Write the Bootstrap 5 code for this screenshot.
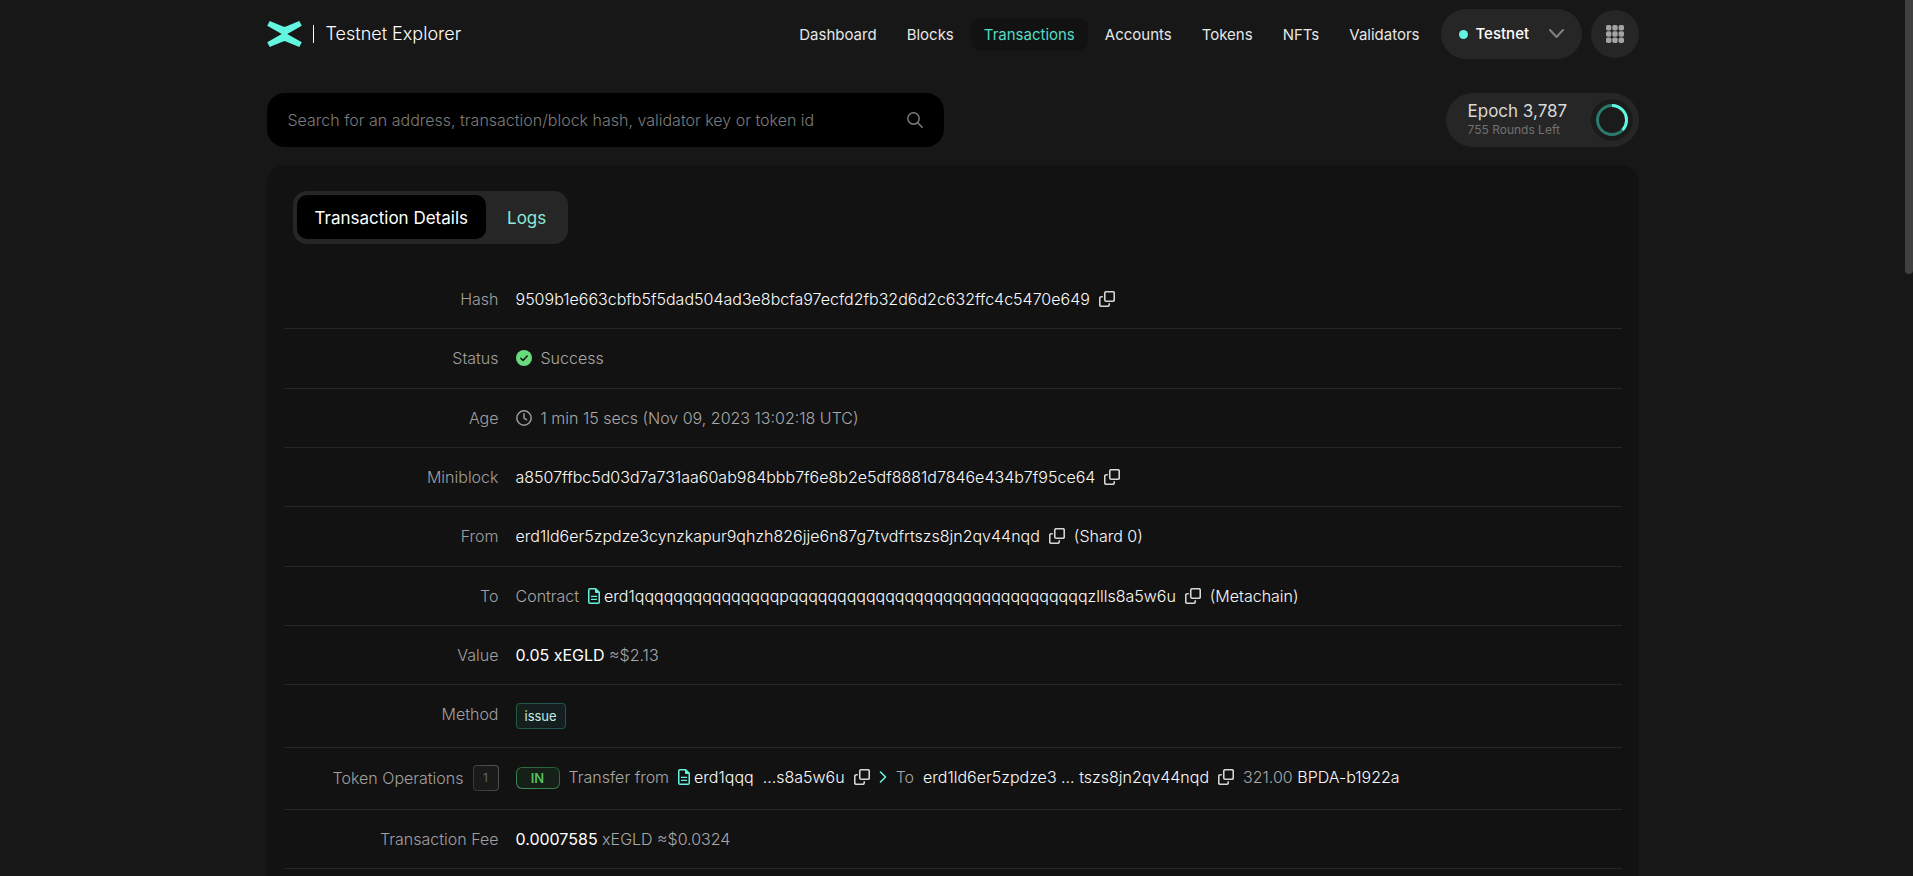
<!DOCTYPE html>
<html lang="en" data-bs-theme="dark">
<head>
<meta charset="utf-8">
<meta name="viewport" content="width=device-width, initial-scale=1">
<title>Transaction Details | Testnet Explorer</title>
<link href="https://cdn.jsdelivr.net/npm/bootstrap@5.3.0/dist/css/bootstrap.min.css" rel="stylesheet">
<style>
  :root {
    --accent: #62f5df;
    --panel: #121212;
    --raised: #262626;
    --muted: #a8a8a8;
    --link: #fafafa;
  }
  html, body { height: 100%; }
  body {
    background: #171717;
    color: var(--muted);
    font-family: Inter, "Liberation Sans", sans-serif;
    font-size: 16px;
    font-weight: 300;
    line-height: 24px;
    overflow: hidden;
  }
  a { text-decoration: none; }
  svg { display: block; flex-shrink: 0; }
  .viewport { height: 100vh; overflow: hidden; padding-right: 8px; }
  .page-width { max-width: 1396px; padding-left: 12px; padding-right: 12px; }

  .topbar { height: 68px; }
  .brand-title { color: #fff; font-size: 18px; padding-left: 12px; }
  .brand-rule { width: 1px; height: 18px; background: #fff; margin-left: 11px; }
  .menu .nav-link {
    color: #e6e6e6;
    font-size: 15px;
    font-weight: 400;
    line-height: 17px;
    padding: 8px 13px;
    border-radius: 10px;
  }
  .menu .nav-link.active { background: var(--panel); color: #55dcc6; }
  .menu { gap: 4px; margin-right: 8px; }
  .network {
    height: 50px;
    width: 141px;
    border-radius: 25px;
    background: var(--raised);
    color: #fff;
    font-size: 15px;
    font-weight: 500;
    padding: 0 18px;
  }
  .network-dot { width: 9px; height: 9px; border-radius: 50%; background: var(--accent); }
  .apps { width: 48px; height: 48px; border-radius: 50%; background: var(--raised); margin-left: 9px; }

  .tools { padding-top: 25px; }
  .search-box {
    width: 677px;
    height: 54px;
    border-radius: 18px;
    background: #000;
    padding: 0 21px;
  }
  .search-box .form-control { color: #ddd; font-size: 16px; font-weight: 300; }
  .search-box .form-control::placeholder { color: #7c7c7c; opacity: 1; }
  .epoch { height: 54px; width: 193px; border-radius: 27px; background: var(--raised); padding: 0 6px 0 22px; font-weight: 400; }
  .epoch-name { color: #d8d8d8; font-size: 17px; line-height: 20px; }
  .epoch-left { color: #717171; font-size: 12px; line-height: 18px; }

  .panel { background: var(--panel); border-radius: 18px; margin-top: 18px; padding: 26px 17px 0; }
  .tab-strip { background: var(--raised); border-radius: 14px; padding: 4px 4px 5px; margin-left: 9px; gap: 3px; }
  .tab-strip .nav-link {
    color: #8ee8d6;
    font-size: 17px;
    font-weight: 400;
    line-height: 24px;
    padding: 11px 18px 9px;
    border-radius: 10px;
  }
  .tab-strip .nav-link.active { background: #000; color: #fff; }

  .details { padding-top: 26px; }
  .detail { min-height: 59px; padding-top: 17px; border-bottom: 1px solid #262626; }
  .detail:nth-child(3n+2) { min-height: 60px; }
  .detail > * { padding-left: 9px; padding-right: 9px; font-weight: 300; margin: 0; }
  .detail dt { text-align: right; color: #a0a0a0; padding-right: 8px; }
  .detail dd a, .bright { color: var(--link); }
  .amount { color: #fff; font-weight: 400; }
  .copy-btn { border: 0; background: none; padding: 0; color: #d6d6d6; }
  .g-icon { gap: 9px; }
  .detail.tall-tag { min-height: 63px; }
  .detail.tall-ops { min-height: 62px; }

  .method-tag {
    height: 26px;
    border: 1px solid transparent;
    border-radius: 4px;
    background: linear-gradient(90deg, #15201c, #141e20) padding-box, linear-gradient(90deg, #23573f, #1c5360) border-box;
    color: #c4eee4;
    font-size: 13px;
    font-weight: 400;
    line-height: 24px;
    padding: 0 8px;
    margin-top: 1px;
  }
  .in-tag {
    width: 44px;
    height: 22px;
    border: 1px solid transparent;
    border-radius: 6px;
    background: linear-gradient(#142018, #142018) padding-box, linear-gradient(200deg, #245c2f, #3f8f5e) border-box;
    color: #55bf59;
    font-size: 13px;
    font-weight: 600;
    line-height: 20px;
    margin-top: 2px;
  }
  .count-tag {
    width: 26px;
    height: 26px;
    border: 1px solid transparent;
    border-radius: 4px;
    background: linear-gradient(#1a1a1b, #1a1a1b) padding-box, linear-gradient(60deg, #32323a, #55555a) border-box;
    color: #666;
    font-size: 12px;
    font-weight: 400;
    line-height: 24px;
  }
  .scroll-thumb { position: fixed; top: 0; right: 0; width: 8px; height: 274px; background: #404040; border-radius: 0 0 4px 4px; }
</style>
</head>
<body>
<svg width="0" height="0" class="position-absolute" aria-hidden="true">
  <symbol id="copy" viewBox="0 0 16 16">
    <rect x="5.75" y=".75" width="9.5" height="9.5" rx="1.4" fill="none" stroke="currentColor" stroke-width="1.6"/>
    <path d="M3.8 5.75H2.2A1.45 1.45 0 0 0 .75 7.2v6.6a1.45 1.45 0 0 0 1.45 1.45h6.6a1.45 1.45 0 0 0 1.45-1.45v-1.6" fill="none" stroke="currentColor" stroke-width="1.6"/>
  </symbol>
  <symbol id="contract" viewBox="0 0 12 16">
    <path d="M2 .75h5.6l3.65 3.65V14c0 .7-.55 1.25-1.25 1.25H2C1.3 15.25.75 14.7.75 14V2C.75 1.3 1.3.75 2 .75z" fill="none" stroke="currentColor" stroke-width="1.5"/>
    <path d="M7 .5V4a1 1 0 0 0 1 1h3.5zM3 7.75h6v1.3H3zM3 10.75h6v1.3H3z" fill="currentColor"/>
  </symbol>
</svg>

<div class="viewport">
  <header class="container-fluid page-width topbar d-flex align-items-center">
    <a href="#" class="d-flex align-items-center">
      <svg width="35" height="26" viewBox="0 0 35 26" aria-label="Home"><path fill="#62f5df" d="M20.3 13 34.8 4.8 32.3 0 18.3 5.7a2.2 2.2 0 0 1-1.6 0L2.7 0 .2 4.8 14.7 13 .2 21.2 2.7 26l14-5.7a2.2 2.2 0 0 1 1.6 0l14 5.7 2.5-4.8z"/></svg>
      <span class="brand-rule"></span>
      <span class="brand-title">Testnet Explorer</span>
    </a>
    <nav class="nav menu ms-auto flex-nowrap">
      <a class="nav-link" href="#">Dashboard</a>
      <a class="nav-link" href="#">Blocks</a>
      <a class="nav-link active" href="#" aria-current="page">Transactions</a>
      <a class="nav-link" href="#">Accounts</a>
      <a class="nav-link" href="#">Tokens</a>
      <a class="nav-link" href="#">NFTs</a>
      <a class="nav-link" href="#">Validators</a>
    </nav>
    <button type="button" class="network border-0 d-flex align-items-center">
      <span class="network-dot me-2"></span>Testnet
      <svg class="ms-auto" width="15" height="10" viewBox="0 0 15 10" fill="none" stroke="#808080" stroke-width="2" stroke-linecap="round" stroke-linejoin="round"><path d="M1 1l6.5 7L14 1"/></svg>
    </button>
    <button type="button" class="apps border-0 p-0 d-flex align-items-center justify-content-center" aria-label="Apps">
      <svg width="18" height="18" viewBox="0 0 18 18" fill="#a3a3a3"><rect width="5.4" height="5.4" rx="1.7"/><rect x="6.3" width="5.4" height="5.4" rx="1.7"/><rect x="12.6" width="5.4" height="5.4" rx="1.7"/><rect y="6.3" width="5.4" height="5.4" rx="1.7"/><rect x="6.3" y="6.3" width="5.4" height="5.4" rx="1.7"/><rect x="12.6" y="6.3" width="5.4" height="5.4" rx="1.7"/><rect y="12.6" width="5.4" height="5.4" rx="1.7"/><rect x="6.3" y="12.6" width="5.4" height="5.4" rx="1.7"/><rect x="12.6" y="12.6" width="5.4" height="5.4" rx="1.7"/></svg>
    </button>
  </header>

  <main class="container-fluid page-width">
    <div class="tools d-flex justify-content-between">
      <form class="search-box d-flex align-items-center" role="search">
        <input type="text" class="form-control border-0 bg-transparent shadow-none p-0" aria-label="Search" placeholder="Search for an address, transaction/block hash, validator key or token id">
        <button type="submit" class="copy-btn" aria-label="Search">
          <svg width="16" height="16" viewBox="0 0 16 16" fill="none" stroke="#808080" stroke-width="1.4" stroke-linecap="round"><circle cx="6.5" cy="6.5" r="5.7"/><path d="M10.7 10.7l4.5 4.5"/></svg>
        </button>
      </form>
      <div class="epoch d-flex align-items-center justify-content-between">
        <div>
          <div class="epoch-name">Epoch 3,787</div>
          <div class="epoch-left">755 Rounds Left</div>
        </div>
        <svg width="42" height="42" viewBox="0 0 42 42" fill="none"><circle cx="21" cy="21" r="21" fill="#1b1b1b"/><circle cx="21" cy="21" r="14.5" stroke="#2b7a6e" stroke-width="3"/><circle cx="21" cy="21" r="14.5" stroke="#62f5df" stroke-width="3" pathLength="100" stroke-dasharray="37 100" transform="rotate(-90 21 21)"/></svg>
      </div>
    </div>

    <section class="panel">
      <div class="d-flex">
        <nav class="nav tab-strip">
          <a class="nav-link active" href="#" aria-current="page">Transaction Details</a>
          <a class="nav-link" href="#">Logs</a>
        </nav>
      </div>

      <dl class="details mb-0">
        <div class="detail row gx-0">
          <dt class="col-2">Hash</dt>
          <dd class="col-10 d-flex align-items-center align-self-start g-icon"><span class="bright">9509b1e663cbfb5f5dad504ad3e8bcfa97ecfd2fb32d6d2c632ffc4c5470e649</span>
            <button type="button" class="copy-btn" aria-label="Copy"><svg width="16" height="16"><use href="#copy"/></svg></button></dd>
        </div>
        <div class="detail row gx-0">
          <dt class="col-2">Status</dt>
          <dd class="col-10 d-flex align-items-center align-self-start g-icon"><svg width="16" height="16" viewBox="0 0 16 16"><circle cx="8" cy="8" r="8" fill="#68db7f"/><path d="M4.8 8.3l2.2 2.2 4.2-4.4" fill="none" stroke="#121212" stroke-width="1.5" stroke-linecap="round" stroke-linejoin="round"/></svg>Success</dd>
        </div>
        <div class="detail row gx-0">
          <dt class="col-2">Age</dt>
          <dd class="col-10 d-flex align-items-center align-self-start g-icon"><svg width="16" height="16" viewBox="0 0 16 16" fill="none" stroke="#9b9b9b" stroke-width="1.5" stroke-linecap="round"><circle cx="8" cy="8" r="7.2"/><path d="M8 3.8V8l2.7 1.8"/></svg>1 min 15 secs (Nov 09, 2023 13:02:18 UTC)</dd>
        </div>
        <div class="detail row gx-0">
          <dt class="col-2">Miniblock</dt>
          <dd class="col-10 d-flex align-items-center align-self-start g-icon"><a href="#">a8507ffbc5d03d7a731aa60ab984bbb7f6e8b2e5df8881d7846e434b7f95ce64</a>
            <button type="button" class="copy-btn" aria-label="Copy"><svg width="16" height="16"><use href="#copy"/></svg></button></dd>
        </div>
        <div class="detail row gx-0">
          <dt class="col-2">From</dt>
          <dd class="col-10 d-flex align-items-center align-self-start g-icon"><a href="#">erd1ld6er5zpdze3cynzkapur9qhzh826jje6n87g7tvdfrtszs8jn2qv44nqd</a>
            <button type="button" class="copy-btn" aria-label="Copy"><svg width="16" height="16"><use href="#copy"/></svg></button>
            <a href="#">(Shard 0)</a></dd>
        </div>
        <div class="detail row gx-0">
          <dt class="col-2">To</dt>
          <dd class="col-10 d-flex align-items-center align-self-start g-icon"><span>Contract</span>
            <span class="d-flex align-items-center gap-1"><svg width="12" height="16" color="#62f5df"><use href="#contract"/></svg><a href="#">erd1qqqqqqqqqqqqqqqpqqqqqqqqqqqqqqqqqqqqqqqqqqqqqqqzllls8a5w6u</a></span>
            <button type="button" class="copy-btn" aria-label="Copy"><svg width="16" height="16"><use href="#copy"/></svg></button>
            <a href="#">(Metachain)</a></dd>
        </div>
        <div class="detail row gx-0">
          <dt class="col-2">Value</dt>
          <dd class="col-10"><span class="amount">0.05 xEGLD</span> ≈$2.13</dd>
        </div>
        <div class="detail tall-tag row gx-0">
          <dt class="col-2">Method</dt>
          <dd class="col-10 d-flex align-items-start"><span class="method-tag">issue</span></dd>
        </div>
        <div class="detail tall-ops row gx-0">
          <dt class="col-2 d-flex align-items-center justify-content-end align-self-start g-icon">Token Operations <span class="count-tag text-center">1</span></dt>
          <dd class="col-10 d-flex align-items-center align-self-start g-icon">
            <span class="in-tag text-center">IN</span>
            <span>Transfer from</span>
            <span class="d-flex align-items-center gap-1"><svg width="12" height="16" color="#62f5df"><use href="#contract"/></svg><a href="#" class="d-flex g-icon"><span>erd1qqq</span><span>...s8a5w6u</span></a></span>
            <button type="button" class="copy-btn" aria-label="Copy"><svg width="16" height="16"><use href="#copy"/></svg></button>
            <svg width="8" height="12" viewBox="0 0 8 12" fill="none" stroke="#62f5df" stroke-width="1.6" stroke-linecap="round" stroke-linejoin="round"><path d="M1.5 1l5 5-5 5"/></svg>
            <span>To</span>
            <a href="#">erd1ld6er5zpdze3 ... tszs8jn2qv44nqd</a>
            <button type="button" class="copy-btn" aria-label="Copy"><svg width="16" height="16"><use href="#copy"/></svg></button>
            <span>321.00 <a href="#">BPDA-b1922a</a></span>
          </dd>
        </div>
        <div class="detail row gx-0">
          <dt class="col-2">Transaction Fee</dt>
          <dd class="col-10"><span class="amount">0.0007585</span> xEGLD ≈$0.0324</dd>
        </div>
        <div class="detail row gx-0"></div>
      </dl>
    </section>
  </main>
</div>
<div class="scroll-thumb" aria-hidden="true"></div>
<script src="https://cdn.jsdelivr.net/npm/bootstrap@5.3.0/dist/js/bootstrap.bundle.min.js"></script>
</body>
</html>
